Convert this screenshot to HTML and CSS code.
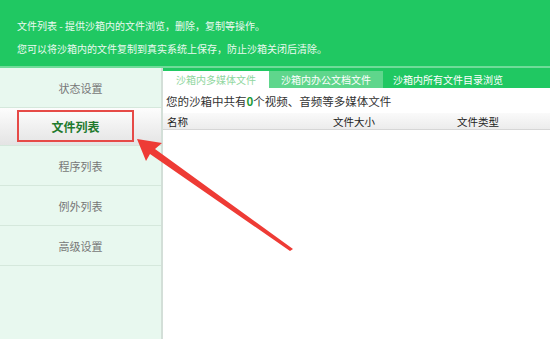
FILE: index.html
```html
<!DOCTYPE html>
<html lang="zh-CN">
<head>
  <meta charset="UTF-8">
  <meta name="viewport" content="width=device-width, initial-scale=1.0">
  <title>文件列表</title>
  <link rel="stylesheet" href="styles.css">
</head>
<body>
  <div class="header">
    <p>文件列表 - 提供沙箱内的文件浏览，删除，复制等操作。</p>
    <p>您可以将沙箱内的文件复制到真实系统上保存，防止沙箱关闭后清除。</p>
  </div>

  <div class="main">
    <div class="sidebar">
      <div class="nav-item">状态设置</div>
      <div class="nav-item active"><span class="mark">文件列表</span></div>
      <div class="nav-item">程序列表</div>
      <div class="nav-item">例外列表</div>
      <div class="nav-item">高级设置</div>
    </div>

    <div class="content">
      <div class="tabs">
        <div class="tab current">沙箱内多媒体文件</div>
        <div class="tab second">沙箱内办公文档文件</div>
        <div class="tab third">沙箱内所有文件目录浏览</div>
      </div>
      <div class="summary">您的沙箱中共有<b>0</b>个视频、音频等多媒体文件</div>
      <div class="table-head">
        <span class="col-name">名称</span>
        <span class="col-size">文件大小</span>
        <span class="col-type">文件类型</span>
      </div>
    </div>
  </div>

  <!-- annotation arrow -->
  <svg class="arrow" width="550" height="339" viewBox="0 0 550 339">
    <polygon points="137,139 162,143 155,149 293,249 290,251 150,154 146,161" fill="#ee3b35"/>
  </svg>
</body>
</html>
```

FILE: styles.css
```css
body {
  margin: 0;
  font-family: "Noto Sans CJK SC", "Liberation Sans", sans-serif;
  background-color: #fff;
  width: 550px;
  height: 339px;
  overflow: hidden;
  position: relative;
}

.header {
  height: 66px;
  background-color: #20c862;
  border-bottom: 2px solid #6fdc99;
  padding-left: 17px;
  color: #eafaf0;
  font-size: 10px;
}

.header p {
  margin: 0;
  line-height: 23px;
}

.header p:first-child {
  padding-top: 14px;
}

.main {
  display: flex;
  height: 271px;
}

.sidebar {
  width: 161px;
  background-color: #e8f8ef;
  border-right: 2px solid #d3dfd8;
}

.nav-item {
  height: 39px;
  border-bottom: 1px solid #d5e8dc;
  display: flex;
  justify-content: center;
  align-items: center;
  font-size: 11px;
  color: #777;
}

.nav-item.active {
  height: 37px;
  background: linear-gradient(#fdfdfd, #e4e4e4);
  justify-content: flex-start;
  align-items: flex-start;
  padding-left: 17px;
}

.mark {
  margin-top: 2px;
  width: 113px;
  height: 28px;
  border: 2px solid #e64a47;
  display: flex;
  justify-content: center;
  align-items: center;
  font-size: 12px;
  font-weight: bold;
  color: #1f7a2e;
}

.content {
  flex: 1;
}

.tabs {
  display: flex;
  background-color: #20c862;
  padding-top: 3px;
  height: 17px;
}

.tab {
  display: flex;
  align-items: center;
  justify-content: center;
  font-size: 10px;
  color: #fff;
}

.tab.current {
  width: 106px;
  background-color: #fff;
  color: #8fd69e;
}

.tab.second {
  width: 114px;
  background-color: #5fd68c;
}

.tab.third {
  width: 130px;
}

.summary {
  height: 25px;
  line-height: 26px;
  padding-left: 3px;
  font-size: 11.5px;
  color: #333;
}

.summary b {
  color: #1e9a3a;
}

.table-head {
  display: flex;
  height: 16px;
  align-items: center;
  background: linear-gradient(#fafafa, #ececec);
  border-bottom: 1px solid #d6d6d6;
  font-size: 10.5px;
  color: #222;
}

.col-name {
  padding-left: 4px;
  width: 166px;
}

.col-size {
  width: 124px;
}

.arrow {
  position: absolute;
  left: 0;
  top: 0;
}
```
